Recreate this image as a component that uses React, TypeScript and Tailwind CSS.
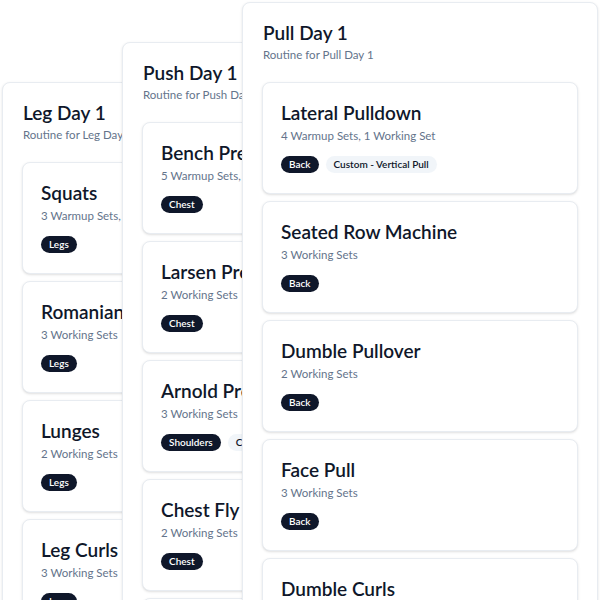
const ROUTINES = [
  {
    name: "Leg Day 1",
    pos: "left-[2px] top-[82px]",
    exercises: [
      { name: "Squats", sets: "3 Warmup Sets, 3 Working Sets", tags: ["Legs"] },
      { name: "Romanian Deadlift", sets: "3 Working Sets", tags: ["Legs"] },
      { name: "Lunges", sets: "2 Working Sets", tags: ["Legs"] },
      { name: "Leg Curls", sets: "3 Working Sets", tags: ["Legs"] },
      { name: "Calf Raises", sets: "3 Working Sets", tags: ["Legs"] },
    ],
  },
  {
    name: "Push Day 1",
    pos: "left-[122px] top-[42px]",
    exercises: [
      { name: "Bench Press", sets: "5 Warmup Sets, 1 Working Set", tags: ["Chest"] },
      { name: "Larsen Press", sets: "2 Working Sets", tags: ["Chest"] },
      { name: "Arnold Press", sets: "3 Working Sets", tags: ["Shoulders", "Custom - Overhead Press"] },
      { name: "Chest Fly", sets: "2 Working Sets", tags: ["Chest"] },
      { name: "Tricep Pushdown", sets: "3 Working Sets", tags: ["Arms"] },
    ],
  },
  {
    name: "Pull Day 1",
    pos: "left-[242px] top-[2px]",
    exercises: [
      { name: "Lateral Pulldown", sets: "4 Warmup Sets, 1 Working Set", tags: ["Back", "Custom - Vertical Pull"] },
      { name: "Seated Row Machine", sets: "3 Working Sets", tags: ["Back"] },
      { name: "Dumble Pullover", sets: "2 Working Sets", tags: ["Back"] },
      { name: "Face Pull", sets: "3 Working Sets", tags: ["Back"] },
      { name: "Dumble Curls", sets: "3 Working Sets", tags: ["Arms"] },
    ],
  },
];

function Badge({ label }: { label: string }) {
  const custom = label.startsWith("Custom");
  return (
    <span
      className={
        custom
          ? "flex h-[17px] items-center rounded-full bg-[#f1f5f9] px-2 text-[10px] font-semibold whitespace-nowrap text-[#0f172a]"
          : "flex h-[17px] items-center rounded-full bg-[#0f172a] px-2 text-[10px] font-semibold whitespace-nowrap text-white"
      }
    >
      {label}
    </span>
  );
}

export default function App() {
  return (
    <div
      className="relative h-[600px] w-[600px] overflow-hidden bg-white text-[#0f172a]"
      style={{ fontFamily: "Lato, 'Open Sans', sans-serif" }}
    >
      {ROUTINES.map((r) => (
        <div
          key={r.name}
          className={`absolute ${r.pos} w-[356px] rounded-lg border border-[#e8ecf1] bg-white px-[19px] pt-5 shadow-sm`}
        >
          <h2 className="pl-px text-[19px] leading-5 font-semibold whitespace-nowrap">{r.name}</h2>
          <p className="mt-1 pl-px text-[11.5px] leading-4 whitespace-nowrap text-[#64748b]">Routine for {r.name}</p>
          <div className="mt-[19px] flex flex-col gap-[7px]">
            {r.exercises.map((ex) => (
              <div
                key={ex.name}
                className="rounded-lg border border-[#e8ecf1] bg-white px-[18px] py-5 shadow-sm"
              >
                <h3 className="text-[19px] leading-5 font-semibold whitespace-nowrap">{ex.name}</h3>
                <p className="mt-[5px] text-[11.5px] leading-4 whitespace-nowrap text-[#64748b]">{ex.sets}</p>
                <div className="mt-3 flex gap-[7px]">
                  {ex.tags.map((t) => (
                    <Badge key={t} label={t} />
                  ))}
                </div>
              </div>
            ))}
          </div>
        </div>
      ))}
    </div>
  );
}
